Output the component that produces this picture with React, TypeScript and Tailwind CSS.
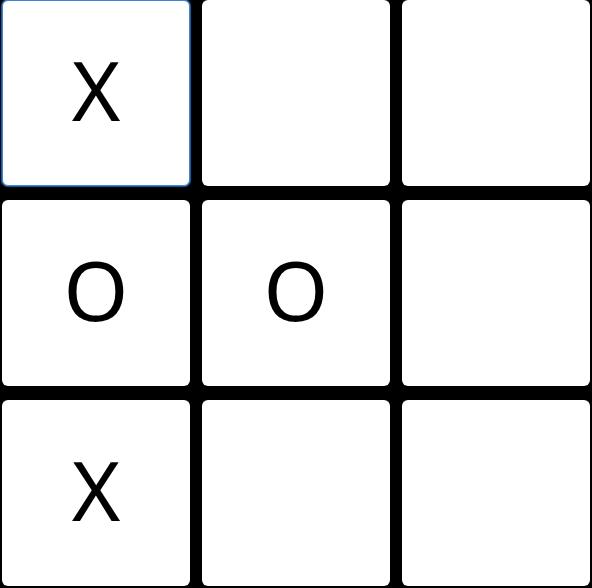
const board = ["X", "", "", "O", "O", "", "X", "", ""];

export default function App() {
  return (
    <div className="w-[592px] h-[588px] bg-black overflow-hidden">
      <div className="grid grid-cols-[188px_188px_188px] grid-rows-[186px_186px_186px] gap-x-[12px] gap-y-[14px] pl-[2px]">
        {board.map((v, i) => (
          <button
            key={i}
            className={
              i === 0
                ? "bg-white rounded-[6px] border border-[#3a86d8] shadow-[0_0_1px_1px_#2a5fa0] flex items-center justify-center pb-[9px] text-black text-[83px] leading-none font-['Noto_Sans',sans-serif]"
                : "bg-white rounded-[6px] flex items-center justify-center pb-[9px] text-black text-[83px] leading-none font-['Noto_Sans',sans-serif]"
            }
          >
            {v}
          </button>
        ))}
      </div>
    </div>
  );
}
